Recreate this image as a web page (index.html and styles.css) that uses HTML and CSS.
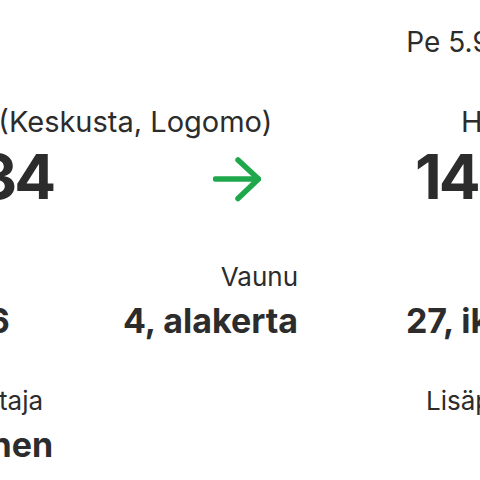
FILE: index.html
```html
<!DOCTYPE html>
<html lang="fi">
<head>
<meta charset="utf-8">
<title>Matkalippu</title>
<link rel="stylesheet" href="styles.css">
</head>
<body>
<main class="sheet">
  <header class="trip">
    <div class="date">Pe 5.9.2025</div>
    <div class="route">
      <div class="stop">Turku (Keskusta, Logomo)</div>
      <div class="spacer"></div>
      <div class="stop end">Helsinki</div>
      <div class="time">11:34</div>
      <svg class="arrow" viewBox="0 0 48 48" aria-hidden="true">
        <path d="M2.5 23H45" />
        <path d="M25 4L45.5 23L25 42.5" />
      </svg>
      <div class="time end">14:35</div>
    </div>
  </header>
  <dl class="details">
    <div class="field">
      <dt class="label">Juna</dt>
      <dd class="value">IC 126</dd>
    </div>
    <div class="field end">
      <dt class="label">Vaunu</dt>
      <dd class="value">4, alakerta</dd>
    </div>
    <div class="field end">
      <dt class="label">Paikka</dt>
      <dd class="value">27, ikkuna</dd>
    </div>
    <div class="field">
      <dt class="label">Matkustaja</dt>
      <dd class="value">Virtanen</dd>
    </div>
    <div class="field end"></div>
    <div class="field end">
      <dt class="label">Lisäpalvelut</dt>
      <dd class="value"></dd>
    </div>
  </dl>
</main>
</body>
</html>
```
FILE: styles.css
```css
html, body {
  margin: 0;
  background: #ffffff;
  overflow: hidden;
}

.sheet {
  width: 663px;
  margin-left: -91px;
  padding-top: 25px;
  color: #2c2c2c;
  font-family: Inter, "Noto Sans", sans-serif;
}

.trip {
  padding: 0 3px 0 3px;
}

.date {
  font-size: 28px;
  line-height: 34px;
  text-align: right;
  margin-bottom: 45px;
  margin-right: 3px;
  white-space: nowrap;
}

.route {
  display: grid;
  grid-template-columns: 301px 48px 1fr;
  row-gap: 7px;
}

.stop {
  font-size: 29px;
  line-height: 35px;
  white-space: nowrap;
}

.time {
  font-size: 62px;
  line-height: 62px;
  font-weight: 700;
  letter-spacing: -3px;
  white-space: nowrap;
}

.end {
  text-align: right;
}

.arrow {
  display: block;
  width: 48px;
  height: 48px;
  margin-top: 10px;
  fill: none;
  stroke: #1fa84b;
  stroke-width: 5.5;
  stroke-linecap: round;
  stroke-linejoin: round;
}

.details {
  display: grid;
  grid-template-columns: 201px 188px 274px;
  row-gap: 43.5px;
  margin: 52.5px 0 0;
}

.field {
  display: flex;
  flex-direction: column;
  gap: 8.5px;
  min-height: 80.5px;
}

.field.end {
  align-items: flex-end;
}

.label {
  margin: 0;
  font-size: 26px;
  line-height: 32px;
  white-space: nowrap;
}

.value {
  margin: 0;
  font-size: 34px;
  line-height: 40px;
  font-weight: 700;
  white-space: nowrap;
  min-height: 40px;
}
```
